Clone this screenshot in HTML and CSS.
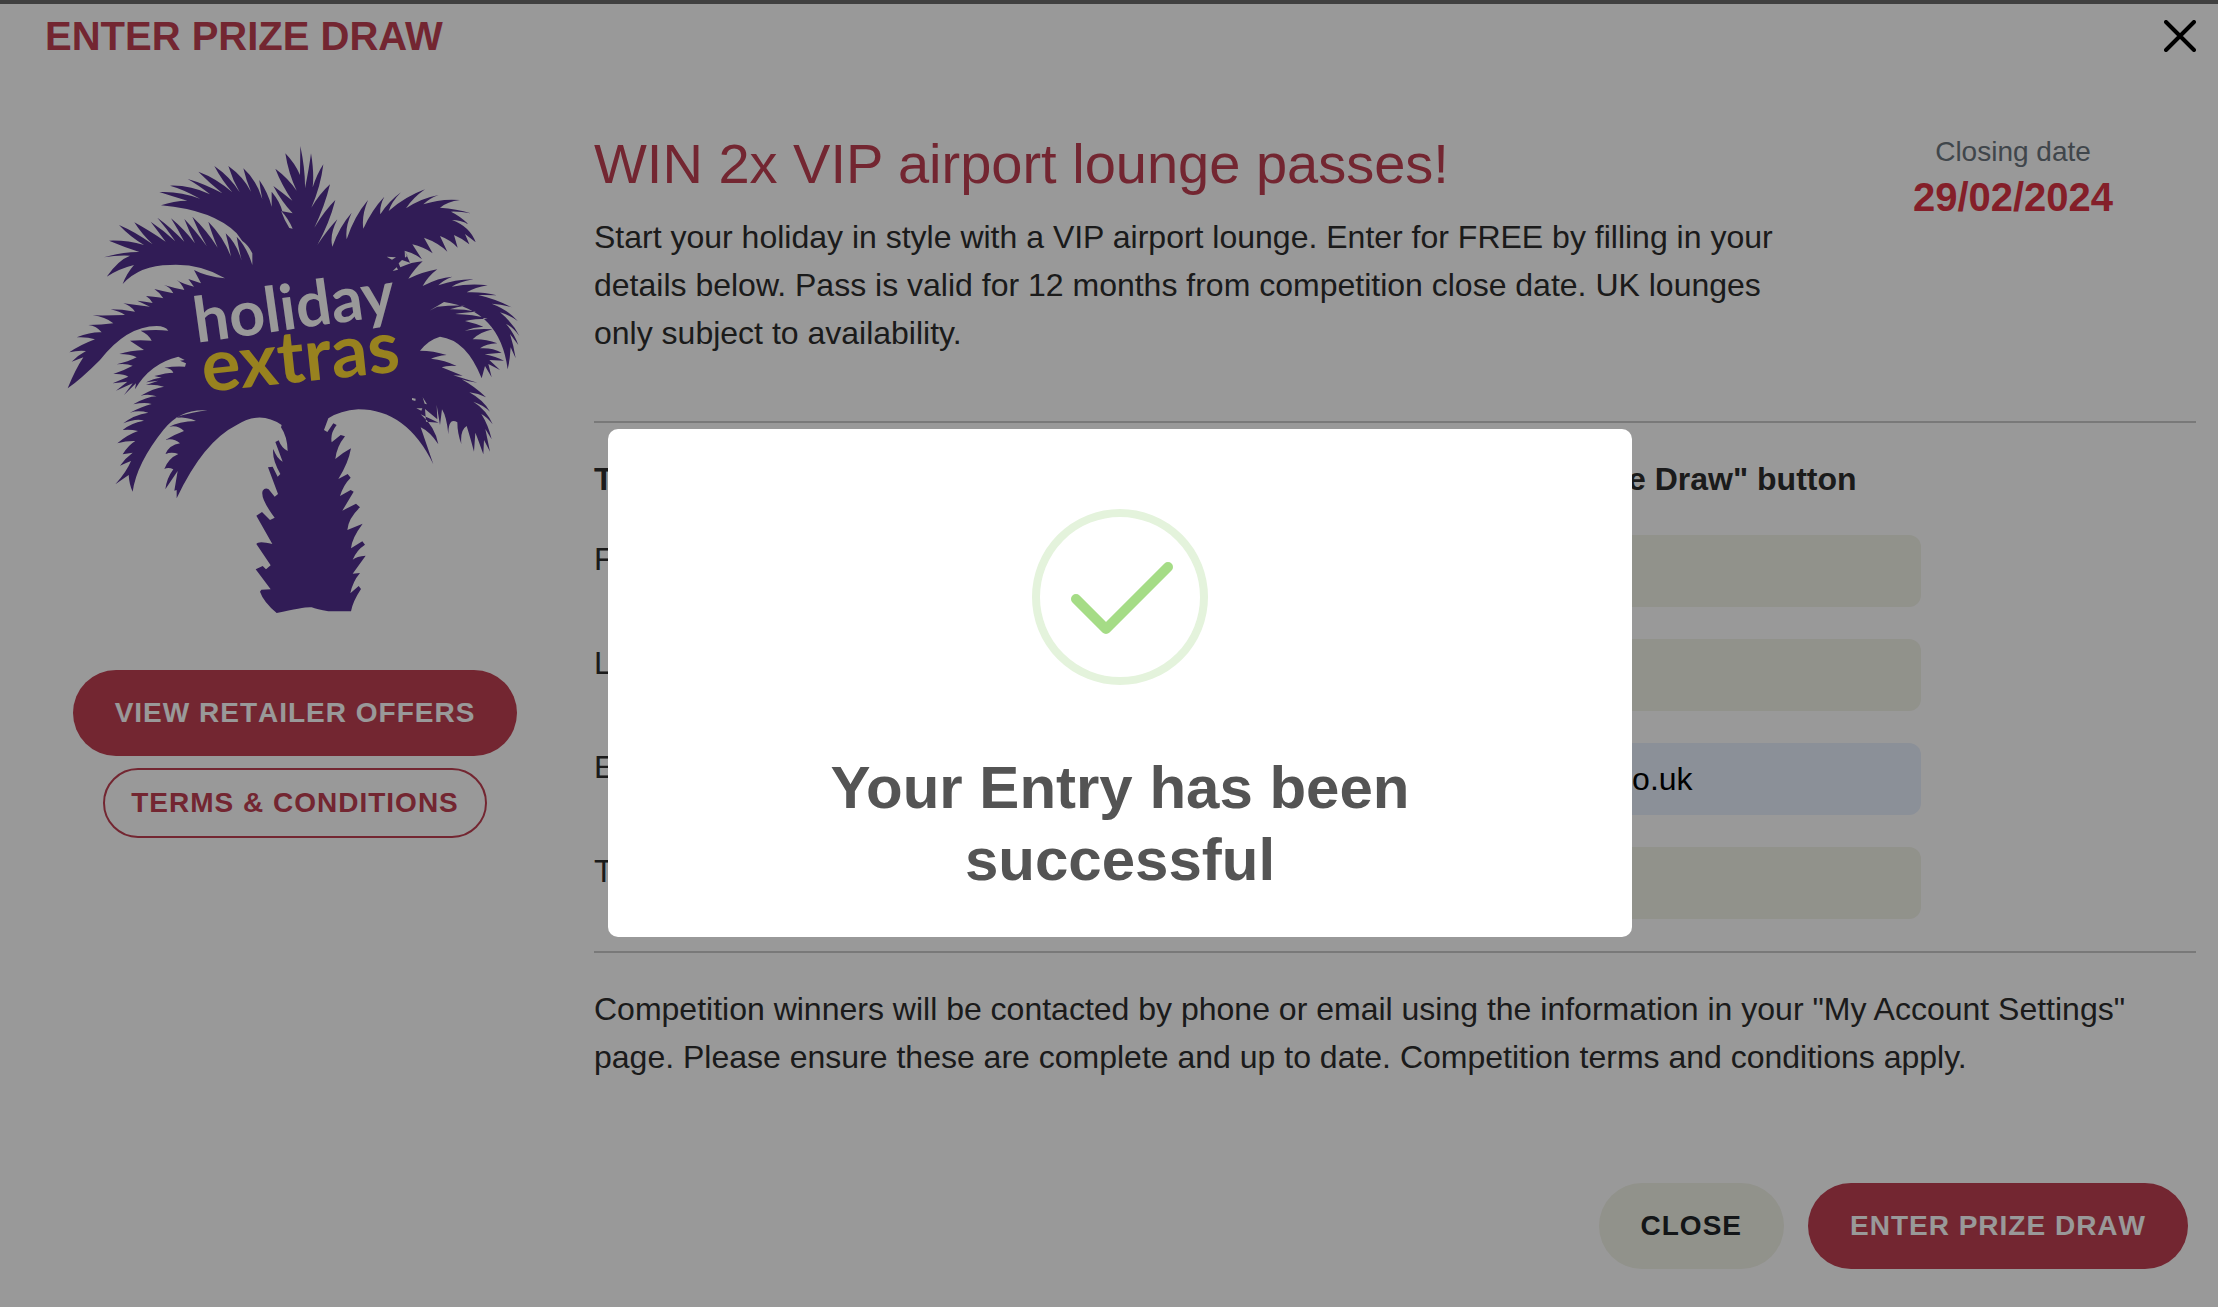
FILE: index.html
```html
<!DOCTYPE html>
<html lang="en">
<head>
<meta charset="utf-8">
<meta name="viewport" content="width=device-width, initial-scale=1">
<title>Enter Prize Draw</title>
<link rel="stylesheet" href="styles.css">
</head>
<body>
<div class="page">
  <header class="header">
    <h1 class="header-title">ENTER PRIZE DRAW</h1>
    <button class="icon-button" type="button" aria-label="Close dialog">
      <svg class="cross" viewBox="0 0 32 32" aria-hidden="true"><path d="M2 2L30 30M30 2L2 30"/></svg>
    </button>
  </header>

  <div class="columns">
    <aside class="retailer">
      <svg class="logo" viewBox="0 0 1470 1500" role="img" aria-label="Holiday Extras">
        <path class="palm" fill-rule="evenodd" d="M751 48Q766 120 765 175Q778 110 783 70Q793 130 788 172Q802 130 820 103Q812 170 784 233Q810 190 840 163Q824 230 793 293Q825 240 856 210Q838 280 802 345Q832 300 862 268Q838 315 847 350Q868 290 905 248Q885 290 890 328Q912 260 954 210Q934 258 940 296Q965 240 1003 200Q988 228 991 253Q1015 215 1053 187Q1025 215 1016 243Q1065 200 1125 178Q1088 204 1068 235Q1115 204 1166 195Q1138 205 1120 223Q1172 205 1230 210Q1192 215 1170 233Q1220 236 1262 250Q1230 244 1203 245Q1230 258 1255 282Q1230 270 1206 270Q1260 290 1277 337L1245 312L1258 343Q1238 326 1212 315L1223 353Q1202 330 1170 318L1192 365Q1165 338 1122 323L1148 370Q1120 350 1087 343L1116 388Q1095 370 1064 362L1080 398L1056 390L1046 400L1051 412Q1085 396 1118 394Q1095 415 1075 446Q1120 425 1162 418Q1135 438 1118 468Q1165 443 1207 440Q1180 450 1165 466Q1220 447 1270 448Q1225 457 1205 470Q1260 460 1313 466Q1275 472 1250 487Q1300 485 1340 496Q1310 494 1285 495Q1340 508 1385 532Q1355 522 1325 521Q1375 540 1403 573Q1378 555 1350 547Q1390 580 1408 618Q1390 592 1368 582Q1390 605 1405 645Q1390 625 1380 612Q1392 650 1397 685L1382 652Q1380 690 1373 718Q1350 540 1182 516L1138 542L1162 530Q1210 525 1245 527Q1220 530 1200 538Q1240 537 1278 545Q1240 547 1215 552Q1270 553 1313 566Q1275 566 1245 573Q1275 580 1300 590Q1270 592 1244 602Q1285 595 1328 598Q1290 606 1268 628Q1305 626 1342 640Q1308 642 1290 655Q1325 652 1355 668L1304 673Q1338 680 1362 692L1318 690L1350 720L1315 702L1325 742L1305 708L1295 745Q1250 630 1170 620Q1135 630 1110 662Q1150 662 1190 675Q1160 678 1143 686Q1185 690 1220 708Q1190 706 1175 712L1238 737L1210 736L1282 758Q1255 756 1235 748Q1275 770 1308 802Q1285 790 1258 787Q1300 810 1320 845Q1300 825 1270 815Q1310 840 1328 883Q1310 860 1294 852Q1315 885 1325 928L1306 897L1320 965L1302 930L1300 973Q1285 930 1276 908L1272 965Q1260 920 1250 888Q1230 900 1234 942Q1222 910 1222 877Q1195 860 1195 913Q1190 860 1176 838L1170 885L1160 825L1162 868L1125 837L1128 875L1166 878L1112 853Q1155 890 1165 943Q1140 905 1112 892L1150 1003Q1070 838 925 838Q870 842 835 865L822 900L832 906L850 880L860 885Q840 910 845 937L872 915L885 919Q860 950 856 987Q875 970 903 955Q895 1000 865 1047L893 1032L902 1043Q880 1065 870 1098L902 1080L911 1085L877 1142L918 1121L930 1132Q895 1165 892 1200L938 1181Q905 1225 903 1255L937 1234L945 1244Q920 1260 908 1289Q920 1278 947 1277L908 1331L930 1329Q908 1355 901 1390L926 1368L933 1377Q908 1415 903 1444L835 1444Q800 1438 785 1432Q770 1429 680 1449Q640 1415 630 1385L634 1379L662 1378L617 1318L638 1308L648 1318L662 1306L619 1242Q625 1232 667 1242L619 1157L636 1146L660 1170L674 1163Q630 1105 638 1082Q645 1072 656 1078L674 1100L684 1092L654 1012L668 1010L683 1040L691 1032Q665 985 670 957Q680 985 698 995L676 936L686 931Q695 955 713 963Q712 920 693 892L695 885Q630 840 560 885Q460 935 380 1105L380 1080L373 1082L383 1023L346 1078Q350 1045 370 1018Q355 1010 343 1017Q355 985 385 972Q365 965 346 972Q358 945 390 940Q370 923 346 930Q370 915 402 903Q385 885 358 890Q385 875 438 873Q415 862 378 862Q430 845 473 841Q390 835 340 900Q260 1000 248 1085Q238 1065 236 1035L196 1063Q230 1025 243 993Q225 1000 210 1007Q225 985 248 968L218 973Q235 945 256 933Q230 932 202 940Q230 915 264 903Q240 897 218 900Q240 880 282 872Q260 863 220 880Q250 855 295 848Q265 840 240 848Q275 830 305 822Q285 815 250 823Q290 800 320 799Q295 790 272 797Q310 775 342 770Q315 762 288 765L325 752L288 757Q310 745 335 743L313 738Q350 728 370 728Q365 715 343 713Q375 708 405 710L408 700L390 692L404 690L385 680Q300 700 255 778L258 760L222 795L248 760L198 782L232 755L188 760Q215 748 235 740Q220 730 190 732Q220 722 248 707Q230 700 200 703Q235 695 260 682Q240 672 208 672Q240 662 282 660L240 632Q270 630 305 632Q295 612 272 602Q320 598 355 602Q345 588 320 588Q230 588 150 690Q90 750 53 775Q75 720 100 682L65 695Q85 675 108 663Q85 660 58 667Q90 645 135 628Q110 620 80 622Q125 605 155 607Q140 588 115 585Q155 585 190 580Q165 560 128 556Q170 557 225 555Q210 545 182 538Q215 538 255 545Q240 525 220 520Q260 525 300 530L262 512Q285 515 308 519Q300 505 288 498Q320 500 340 505Q330 488 313 477Q345 485 370 490Q360 470 342 465Q375 475 403 480Q395 460 380 450Q400 462 432 470L415 447L453 460L432 420Q470 440 525 445Q450 400 360 405Q270 405 218 462Q230 430 252 405Q210 415 170 440Q205 390 240 377Q200 375 162 382Q220 365 268 366Q220 350 177 332Q230 330 282 345Q240 320 207 285Q255 305 308 343Q275 312 253 277Q295 300 347 335Q325 305 302 275Q340 300 376 334Q350 295 322 263Q360 290 403 335Q385 300 363 265Q400 295 435 340Q418 305 403 267Q435 300 470 348Q445 305 427 260Q470 300 503 353Q485 310 475 275Q520 320 543 380Q535 340 527 310Q560 340 575 392Q565 350 560 320Q590 350 607 405L607 370Q595 345 577 333L560 310Q490 240 333 226Q370 212 412 212Q370 200 328 186Q390 183 450 206Q400 178 360 167Q420 165 480 193Q445 165 413 147Q460 160 517 190Q480 160 445 125Q500 145 547 187Q515 150 493 108Q540 140 569 187Q548 150 535 108Q580 140 603 185Q588 150 580 115Q620 150 637 208Q630 175 628 150Q655 190 665 230L665 185Q690 215 697 244L728 250Q695 215 670 168Q700 190 727 212Q695 165 676 116Q715 145 740 182Q715 130 706 70Q735 100 750 135ZM693 242Q715 265 728 296L718 294Q703 270 693 242ZM1010 380L1038 382L1026 389ZM1028 423L1040 412L1044 419ZM1064 362L1072 377L1065 383ZM1086 804L1097 806L1096 813L1086 810ZM1118 802L1131 823L1124 821ZM1099 835L1117 835L1114 842Z"/>
        <g class="wordmark">
          <text class="word-holiday" x="440" y="638" transform="rotate(-8 440 638)">holiday</text>
          <text class="word-extras" x="462" y="786" transform="rotate(-6 462 786)">extras</text>
        </g>
      </svg>
      <button class="button button-primary" type="button">VIEW RETAILER OFFERS</button>
      <button class="button button-outline" type="button">TERMS &amp; CONDITIONS</button>
    </aside>

    <main class="content">
      <section class="intro">
        <div>
          <h2 class="prize">WIN 2x VIP airport lounge passes!</h2>
          <p class="text">Start your holiday in style with a VIP airport lounge. Enter for FREE by filling in your details below. Pass is valid for 12 months from competition close date. UK lounges only subject to availability.</p>
        </div>
        <div class="closing">
          <p class="closing-label">Closing date</p>
          <p class="closing-date">29/02/2024</p>
        </div>
      </section>

      <form class="entry" id="entry">
        <p class="text instruction">To enter this prize draw, fill out your details and click the "Enter Prize Draw" button</p>
        <div class="row">
          <label class="text" for="first">First name</label>
          <input class="field" id="first" type="text">
        </div>
        <div class="row">
          <label class="text" for="last">Last name</label>
          <input class="field" id="last" type="text">
        </div>
        <div class="row">
          <label class="text" for="email">Email address</label>
          <input class="field field-filled" id="email" type="email" value="customer.name@example.co.uk">
        </div>
        <div class="row">
          <label class="text" for="phone">Telephone</label>
          <input class="field" id="phone" type="tel">
        </div>
      </form>

      <p class="text">Competition winners will be contacted by phone or email using the information in your "My Account Settings" page. Please ensure these are complete and up to date. Competition terms and conditions apply.</p>
    </main>
  </div>

  <footer class="footer">
    <button class="button button-neutral" type="button">CLOSE</button>
    <button class="button button-primary" type="submit" form="entry">ENTER PRIZE DRAW</button>
  </footer>
</div>

<div class="overlay">
  <div class="popup" role="alertdialog" aria-modal="true" aria-labelledby="popup-title">
    <svg class="success" viewBox="0 0 176 176" aria-hidden="true">
      <circle class="success-ring" cx="88" cy="88" r="84"/>
      <path class="success-tick" d="M44 90L74 120L136 58"/>
    </svg>
    <h2 class="popup-title" id="popup-title">Your Entry has been successful</h2>
  </div>
</div>
</body>
</html>
```

FILE: styles.css
```css
* {
  box-sizing: border-box;
}

body {
  margin: 0;
  background: #fff;
  color: #2d2d2d;
  font-family: "Liberation Sans", Arial, Helvetica, sans-serif;
}

h1, h2, p {
  margin: 0;
}

.page {
  min-height: 100vh;
  border-top: 4px solid #6c6c6c;
}

.header {
  display: flex;
  justify-content: space-between;
  align-items: center;
  padding: 8px 22px 0 45px;
}

.header-title {
  color: #c04053;
  font-size: 40px;
  line-height: 48px;
}

.icon-button {
  display: flex;
  padding: 0;
  border: 0;
  background: none;
}

.cross {
  width: 32px;
  height: 32px;
  fill: none;
  stroke: #000;
  stroke-width: 4;
  stroke-linecap: round;
}

.columns {
  display: grid;
  grid-template-columns: 546px minmax(0, 1fr);
  gap: 26px;
  padding: 70px 22px 0;
}

.retailer {
  display: flex;
  flex-direction: column;
  align-items: center;
  gap: 12px;
}

.logo {
  width: 490px;
  height: 500px;
  margin-bottom: 28px;
}

.palm {
  fill: #52308f;
}

.wordmark {
  font-family: Lato, "Open Sans", sans-serif;
  font-weight: 700;
}

.word-holiday {
  fill: #fff;
  font-size: 188px;
}

.word-extras {
  fill: #fdd934;
  font-size: 218px;
}

.button {
  height: 86px;
  padding: 0 42px;
  border: 0;
  border-radius: 43px;
  font-family: inherit;
  font-size: 28px;
  font-weight: 700;
  font-kerning: none;
  letter-spacing: 1px;
  white-space: nowrap;
}

.button-primary {
  background: #c04053;
  color: #fff;
}

.button-outline {
  height: 70px;
  padding: 0 26px;
  border: 2px solid #c04053;
  background: none;
  color: #c04053;
}

.button-neutral {
  background: #f2f3e8;
  color: #212529;
}

.text {
  font-size: 32px;
  line-height: 48px;
}

.intro {
  display: grid;
  grid-template-columns: minmax(0, 1fr) 366px;
  gap: 24px;
  margin-bottom: 64px;
}

.prize {
  margin-bottom: 16px;
  color: #c04053;
  font-size: 56px;
  font-weight: 400;
  line-height: 67px;
}

.closing {
  text-align: center;
}

.closing-label {
  color: #6c757d;
  font-size: 28px;
  line-height: 43px;
}

.closing-date {
  color: #dc3545;
  font-size: 40px;
  font-weight: 700;
  line-height: 48px;
}

.entry {
  display: grid;
  gap: 32px;
  margin-bottom: 32px;
  padding: 32px 0;
  border-top: 2px solid #cacaca;
  border-bottom: 2px solid #cacaca;
}

.instruction {
  font-weight: 700;
}

.row {
  display: grid;
  grid-template-columns: minmax(0, 1fr) 710px;
  padding-right: 275px;
}

.field {
  width: 100%;
  height: 72px;
  padding: 0 24px;
  border: 0;
  border-radius: 12px;
  background: #f2f3e8;
  color: #000;
  font-family: inherit;
  font-size: 32px;
}

.field-filled {
  background: #e8f0fe;
}

.footer {
  display: flex;
  justify-content: flex-end;
  gap: 24px;
  padding: 102px 30px 36px;
}

.overlay {
  position: fixed;
  inset: 0;
  display: grid;
  place-items: center;
  padding: 59px 0 0 22px;
  background: rgba(0, 0, 0, 0.4);
}

.popup {
  display: flex;
  flex-direction: column;
  align-items: center;
  gap: 67px;
  width: 1024px;
  max-width: 100%;
  padding: 80px 64px 41px;
  border-radius: 10px;
  background: #fff;
}

.success {
  width: 176px;
  height: 176px;
  fill: none;
}

.success-ring {
  stroke: #e4f3dc;
  stroke-width: 8;
}

.success-tick {
  stroke: #a5dc86;
  stroke-width: 10;
  stroke-linecap: round;
  stroke-linejoin: round;
}

.popup-title {
  color: #545454;
  font-size: 60px;
  line-height: 72px;
  text-align: center;
}
```
